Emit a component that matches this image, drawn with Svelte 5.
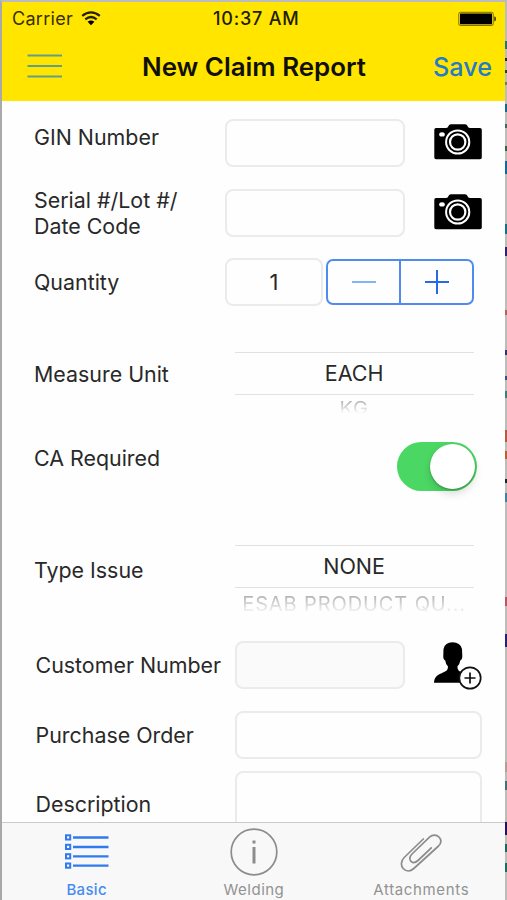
<script>
  const edgeMarks = [
    [39, 8, '#286f80'], [56, 3, '#292b20'], [68, 3, '#373727'], [80, 3, '#777763'], [102, 8, '#116a8b'],
    [122, 4, '#49645c'], [144, 5, '#3d5e4a'], [159, 13, '#136a96'], [222, 10, '#1b6d83'], [245, 9, '#332070'],
    [308, 5, '#b46060'], [348, 5, '#343069'], [374, 4, '#3d4b80'], [389, 7, '#427c72'], [428, 12, '#b85743'],
    [449, 8, '#bd6030'], [477, 4, '#222'], [491, 9, '#477d9f'], [595, 9, '#b85763'], [632, 13, '#29236d'],
    [760, 10, '#b99b96'], [779, 9, '#45716e'], [820, 13, '#29105b'], [842, 8, '#216354'], [861, 9, '#226c5b']
  ];
</script>

{#snippet camera()}
  <svg class="camera" width="48" height="36" viewBox="0 0 48 36">
    <path fill="#000" d="M2 4H12Q14 4 14.500 2Q15 .3 17 .3H31Q33 .3 33.500 2Q34 4 36 4H46Q47.800 4 47.800 5.800V33.500Q47.800 35.300 46 35.300H2Q.3 35.300 .3 33.500V5.800Q.3 4 2 4Z" />
    <ellipse cx="8" cy="10.400" rx="2.800" ry="2.200" fill="#fff" />
    <g fill="none" stroke="#fff">
      <circle cx="23.700" cy="18" r="11.600" stroke-width="2" />
      <circle cx="23.700" cy="18" r="7.700" stroke-width="2.200" />
    </g>
  </svg>
{/snippet}

<div class="screen">
  <div class="phone">
    <header>
      <div class="status">
        <span class="carrier">Carrier</span>
        <svg class="wifi" width="20" height="15" viewBox="0 0 20 15" fill="none" stroke="#242000" stroke-width="2.200">
          <path d="M1.200 4.800Q10-2.200 18.800 4.800M4.300 8.300Q10 3.700 15.700 8.300" />
          <path d="M6.600 10.800Q10 8.200 13.400 10.800L10 14.300Z" fill="#000" stroke="none" />
        </svg>
        <span class="time">10:37 AM</span>
        <svg class="battery" width="40" height="16" viewBox="0 0 40 16">
          <rect x=".8" y="1.300" width="34.400" height="13.200" rx="1.500" fill="none" stroke="#806f00" stroke-width="1" />
          <rect x="2" y="2.500" width="32" height="10.800" fill="#000" />
          <path d="M36.300 5.200Q38 5.500 38 7.900T36.300 10.600Z" fill="#3b3300" />
        </svg>
      </div>
      <nav>
        <svg class="burger" width="35" height="24" viewBox="0 0 35 24">
          <path d="M.5 1.500H35M.5 12H35M.5 22.500H35" stroke="#629f86" stroke-width="2" />
        </svg>
        <h1>New Claim Report</h1>
        <span class="save">Save</span>
      </nav>
    </header>

    <main>
      <div class="row gin">
        <span class="label">GIN Number</span>
        <div class="input mid"></div>
        {@render camera()}
      </div>
      <div class="row serial">
        <span class="label">Serial #/Lot #/<br />Date Code</span>
        <div class="input mid"></div>
        {@render camera()}
      </div>
      <div class="row quantity">
        <span class="label">Quantity</span>
        <div class="input qty">1</div>
        <div class="stepper">
          <div><svg width="26" height="26"><path d="M1 13H25" stroke="#82b5f8" stroke-width="2" /></svg></div>
          <div><svg width="26" height="26"><path d="M1 13H25M13 1V25" stroke="#246be8" stroke-width="2" /></svg></div>
        </div>
      </div>
      <div class="row measure">
        <span class="label">Measure Unit</span>
        <div class="picker">
          <div class="chosen">EACH</div>
          <div class="next"><span class="kg">KG</span></div>
        </div>
      </div>
      <div class="row ca">
        <span class="label">CA Required</span>
        <div class="switch"><div class="knob"></div></div>
      </div>
      <div class="row issue">
        <span class="label">Type Issue</span>
        <div class="picker">
          <div class="chosen">NONE</div>
          <div class="next wide"><span>ESAB PRODUCT QU...</span></div>
        </div>
      </div>
      <div class="row customer">
        <span class="label">Customer Number</span>
        <div class="input grey"></div>
        <svg class="person" width="48" height="48" viewBox="0 0 48 48">
          <path d="M0 40.800C.3 35 3.500 33 7 31.500L12.500 28.800Q14 27.700 14 24.500Q11.800 22.500 11.200 18.500Q9 17.500 9.300 13.500L9.500 7Q11 .3 18.500 .3Q26.300 .3 28 7L28.300 13.500Q28.500 17.500 26.300 18.500Q25.700 22.500 23.400 24.500Q23.400 28 25 29L32 32V40.800Z" />
          <circle cx="36" cy="36" r="10.700" fill="#fff" stroke="#111" stroke-width="1.700" />
          <path d="M30.500 36H41.500M36 30.500V41.500" stroke="#111" stroke-width="1.700" />
        </svg>
      </div>
      <div class="row order">
        <span class="label">Purchase Order</span>
        <div class="input full"></div>
      </div>
      <div class="row description">
        <span class="label">Description</span>
        <div class="input full tall"></div>
      </div>
    </main>

    <footer>
      <div class="tab active">
        <div class="icon">
          <svg width="44" height="36" viewBox="0 0 44 36" fill="none" stroke="#2f7bed">
            {#each [3.5, 13, 22.4, 31.7] as y}
              <rect x="1" y={y - 2.2} width="4.200" height="4.200" stroke-width="2" />
              <path d="M8 {y}H43.500" stroke-width="2.300" />
            {/each}
          </svg>
        </div>
        <span>Basic</span>
      </div>
      <div class="tab">
        <div class="icon">
          <svg width="48" height="48" viewBox="0 0 48 48" fill="none" stroke="#8c8c8c">
            <circle cx="24" cy="24" r="22.800" stroke-width="1.700" />
            <path d="M24 19V35.500M24 12.500V15.500" stroke-width="3" />
          </svg>
        </div>
        <span>Welding</span>
      </div>
      <div class="tab">
        <div class="icon">
          <svg width="42" height="40" viewBox="0 0 42 40" fill="none" stroke="#8c8c8c" stroke-width="1.700" stroke-linecap="round">
            <path d="M23.300 7L4.200 25.500C1 28.700 .5 33.500 3.200 36.500C6.200 39.800 10.500 39.500 13.800 36.500L38 14.500C41.200 11.500 41.700 8 39.200 5.200C36.500 2.300 32.500 2.400 29.500 5.200L12 22C9.500 24.500 9.200 27.500 11 29.300C12.900 31.200 15.500 30.800 18 28.500L31.300 15.800" />
          </svg>
        </div>
        <span class="att">Attachments</span>
      </div>
    </footer>
  </div>
  <div class="edge">
    {#each edgeMarks as [y, h, color]}
      <i style="top:{y}px;height:{h}px;background:{color}"></i>
    {/each}
  </div>
</div>

<style>
  .screen {
    width: 507px;
    height: 900px;
    box-sizing: border-box;
    display: flex;
    overflow: hidden;
    border-top: 2px solid #bcbcc0;
    border-left: 2px solid #a9a9aa;
    font-family: Inter, "Liberation Sans", sans-serif;
    color: #292929;
    background: #fefefe;
  }
  svg { display: block; flex: none; }
  .phone { width: 503px; height: 898px; display: flex; flex-direction: column; flex: none; }
  .edge { position: relative; width: 2px; background: #bdbcb8; }
  .edge i { position: absolute; left: 0; width: 2px; }
  header { height: 99px; background: #ffe500; flex: none; }
  .status { display: flex; height: 33px; align-items: center; box-sizing: border-box; padding-left: 10px; }
  .carrier { width: 61px; font-size: 18px; letter-spacing: .3px; margin-right: 8px; white-space: nowrap; color: #373100; }
  .wifi { margin-bottom: 1px; }
  .time { width: 88px; margin-left: 112px; font-size: 18px; font-weight: 500; letter-spacing: .8px; white-space: nowrap; color: #211d00; }
  .battery { margin-left: 157px; }
  nav { display: flex; align-items: center; height: 64px; }
  .burger { margin: 0 0 3px 25px; }
  h1 { margin: 0 0 0 80px; width: 226px; font-size: 25.900px; font-weight: 600; line-height: 30px; white-space: nowrap; color: #111000; }
  .save { margin-left: 65px; font-size: 25.200px; font-weight: 500; line-height: 30px; white-space: nowrap; color: #247bca; }
  main { height: 721px; display: flex; flex-direction: column; flex: none; overflow: hidden; }
  .row { display: flex; flex: none; height: 48px; padding-left: 32px; align-items: flex-start; }
  .label { width: 191px; font-size: 21.400px; line-height: 26px; white-space: nowrap; flex: none; }
  .input { box-sizing: border-box; height: 48px; border: 2px solid #ebebeb; border-radius: 8px; flex: none; }
  .mid { width: 180px; }
  .camera { margin: 5px 0 0 29px; }
  .gin { margin-top: 18px; }
  .gin .label { padding-top: 5px; }
  .serial { margin-top: 22px; }
  .serial .label { margin-top: -2px; }
  .quantity { margin-top: 21px; }
  .quantity .label { padding-top: 11px; }
  .qty { width: 98px; text-align: center; font-size: 22px; line-height: 44px; }
  .stepper { display: flex; box-sizing: border-box; margin: 1px 0 0 3px; width: 148px; height: 46px; border: 2px solid #508bf0; border-radius: 7px; }
  .stepper div { flex: 1; display: grid; place-items: center; }
  .stepper div + div { border-left: 2px solid #508bf0; }
  .measure { height: 60px; margin-top: 46px; }
  .measure .label, .issue .label, .customer .label, .order .label, .description .label { width: 200.600px; }
  .measure .label { padding-top: 9px; }
  .picker { width: 239px; height: 62px; flex: none; }
  .chosen { box-sizing: border-box; height: 43px; border-top: 1.500px solid #e1e1e1; border-bottom: 1.500px solid #e1e1e1; display: flex; align-items: center; justify-content: center; font-size: 21.500px; padding-bottom: 1px; }
  .next { height: 26px; text-align: center; font-size: 20px; line-height: 26px; color: #a0a0a0; letter-spacing: .8px; mask-image: linear-gradient(#000 10%, #0000 72%); }
  .kg { display: inline-block; transform: scaleY(.85); }
  .wide { height: 30px; line-height: 33px; letter-spacing: .9px; white-space: nowrap; mask-image: linear-gradient(#000 10%, #0000 87%); }
  .ca { margin-top: 30px; }
  .ca .label { padding-top: 3px; margin-right: 172px; }
  .switch { width: 80px; height: 49px; border-radius: 25px; background: #4bd763; display: flex; justify-content: flex-end; align-items: center; box-sizing: border-box; padding-right: 2px; }
  .knob { width: 45px; height: 45px; border-radius: 50%; background: #fff; box-shadow: 0 5px 8px #0002, 0 1px 2px #0004; }
  .issue { height: 68px; margin-top: 55px; }
  .issue .label { padding-top: 12px; }
  .customer { margin-top: 28px; }
  .customer .label, .order .label, .description .label { box-sizing: border-box; padding: 11px 0 0 1.500px; }
  .grey { width: 170.500px; background: #fafafa; }
  .person { margin: 1px 0 0 29px; }
  .order { margin-top: 22px; }
  .full { width: 247px; }
  .description { margin-top: 12px; height: 70px; }
  .description .label { padding-top: 20px; }
  .tall { height: 70px; }
  footer { height: 78px; box-sizing: border-box; border-top: 1.500px solid #cacaca; background: #f8f8f8; display: flex; padding-left: 1px; }
  .tab { width: 167.300px; display: flex; flex-direction: column; align-items: center; color: #929292; font-size: 15px; line-height: 19px; letter-spacing: .5px; }
  .active { color: #478bef; font-weight: 500; letter-spacing: .3px; }
  .att { letter-spacing: .65px; }
  .icon { height: 57px; display: grid; place-items: center; }
</style>
